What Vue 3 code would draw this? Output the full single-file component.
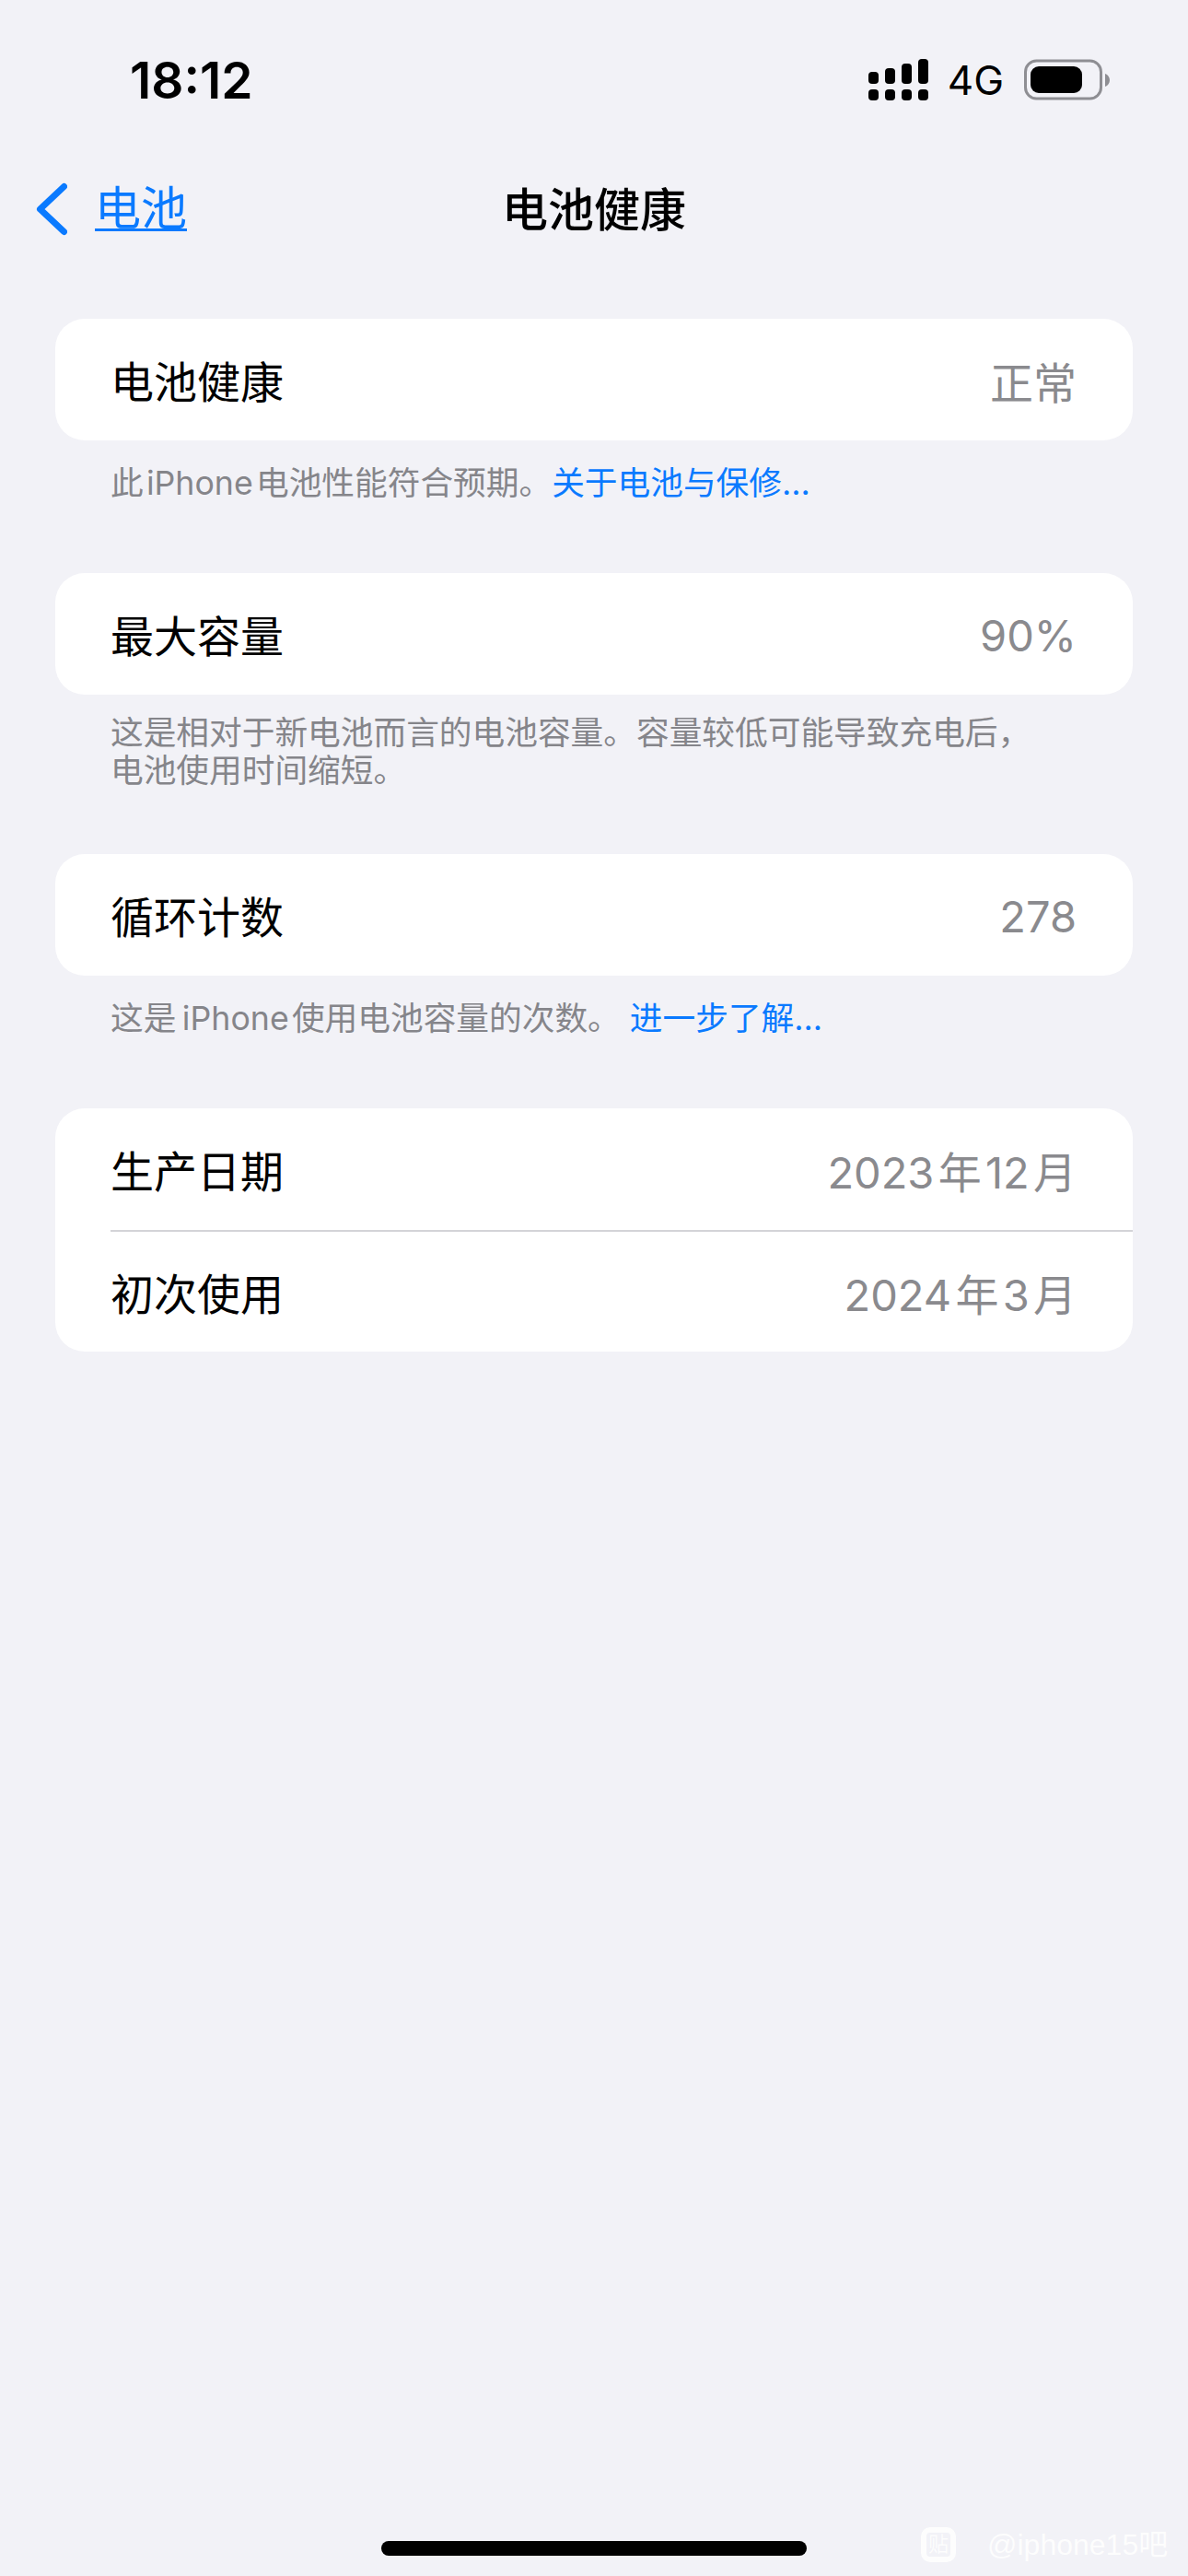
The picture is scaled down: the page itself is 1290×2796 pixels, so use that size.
<template>
  <div class="page">
    <div class="status-bar">
      <span class="time">18:12</span>
      <div class="status-icons">
        <svg class="signal" width="66" height="46" viewBox="0 0 66 46">
          <rect v-for="bar in signalBars" :key="bar.x" :x="bar.x" :y="bar.y" width="11" :height="bar.h" rx="4" />
          <rect v-for="bar in signalBars" :key="'d' + bar.x" :x="bar.x" y="33" width="11" height="12" rx="4" />
        </svg>
        <span class="network">4G</span>
        <svg class="battery" width="94" height="46" viewBox="0 0 94 46">
          <rect x="1.5" y="2" width="82" height="41" rx="12" fill="none" stroke="#8e8e93" stroke-width="3" />
          <rect x="7" y="8" width="56" height="29" rx="9" fill="#000" />
          <path d="M88 16 C91 17 93 20 93 23 C93 26 91 29 88 30 Z" fill="#8e8e93" />
        </svg>
      </div>
    </div>

    <div class="nav-bar">
      <div class="nav-back">
        <svg width="36" height="60" viewBox="0 0 36 60">
          <path d="M32.5 6.5 L6.5 31 L32.5 55.5" fill="none" stroke="#0a7aff" stroke-width="7" stroke-linecap="round" stroke-linejoin="round" />
        </svg>
        <span class="back-label">电池</span>
      </div>
      <span class="nav-title">电池健康</span>
    </div>

    <div class="content">
      <section v-for="group in groups" :key="group.id" class="group" :class="group.cls">
        <div class="card">
          <div v-for="row in group.rows" :key="row.label" class="row">
            <span class="row-label">{{ row.label }}</span>
            <span class="row-value" :class="{ 'row-num': row.num }">{{ row.value }}</span>
          </div>
        </div>
        <p v-if="group.note" class="note">
          {{ group.note }}<span v-if="group.link" class="link">{{ group.link }}</span>
        </p>
      </section>
    </div>

    <div class="home-indicator"></div>

    <div class="watermark">
      <span class="wm-badge">贴</span>
      <span class="wm-text">@iphone15吧</span>
    </div>
  </div>
</template>

<script setup>
const signalBars = [
  { x: 0, y: 14, h: 13 },
  { x: 18, y: 10, h: 17 },
  { x: 36, y: 5, h: 22 },
  { x: 54, y: 0, h: 27 },
];

const groups = [
  {
    id: 'health',
    rows: [{ label: '电池健康', value: '正常' }],
    note: '此\u200aiPhone\u200a电池性能符合预期。',
    link: '关于电池与保修...',
  },
  {
    id: 'capacity',
    cls: 'group-two-line',
    rows: [{ label: '最大容量', value: '90%', num: true }],
    note: '这是相对于新电池而言的电池容量。容量较低可能导致充电后，\n电池使用时间缩短。',
  },
  {
    id: 'cycles',
    rows: [{ label: '循环计数', value: '278', num: true }],
    note: '这是\u2009iPhone\u200a使用电池容量的次数。 ',
    link: '进一步了解...',
  },
  {
    id: 'dates',
    rows: [
      { label: '生产日期', value: '2023\u200a年\u200a12\u200a月' },
      { label: '初次使用', value: '2024\u200a年\u200a3\u200a月' },
    ],
  },
];
</script>

<style>
html,
body {
  margin: 0;
  background: #f2f2f7;
}
</style>

<style scoped>
.page {
  position: relative;
  width: 1290px;
  height: 2796px;
  overflow: hidden;
  background: #f2f2f7;
  color: #000;
  font-family: Inter, "Noto Sans CJK SC", sans-serif;
}

/* 상태바 */
.status-bar {
  height: 170px;
  box-sizing: border-box;
  padding: 54px 84px 0 141px;
  display: flex;
  justify-content: space-between;
  align-items: flex-start;
}

.time {
  font-size: 55px;
  line-height: 66px;
  font-weight: 600;
}

.status-icons {
  display: flex;
  align-items: center;
  gap: 20px;
  margin-top: 10px;
}

.signal {
  fill: #000;
}

.network {
  font-size: 44px;
  line-height: 46px;
  font-weight: 400;
}

.battery {
  margin-left: 2px;
}

/* 네비게이션 */
.nav-bar {
  position: relative;
  height: 116px;
  display: flex;
  align-items: center;
  justify-content: center;
}

.nav-back {
  position: absolute;
  left: 37px;
  top: 26px;
  display: flex;
  align-items: center;
  gap: 30px;
}

.back-label {
  font-size: 50px;
  line-height: 48px;
  height: 46px;
  color: #0a7aff;
  border-bottom: 3px solid #0a7aff;
}

.nav-title {
  font-size: 50px;
  font-weight: 500;
  line-height: 62px;
}

/* 목록 */
.content {
  padding: 60px 60px 0;
}

.group {
  margin-bottom: 26px;
}

.card {
  background: #fff;
  border-radius: 32px;
  overflow: hidden;
}

.row {
  height: 132px;
  box-sizing: border-box;
  margin-left: 60px;
  padding: 0 61px 2px 0;
  display: flex;
  align-items: center;
  justify-content: space-between;
}

.row + .row {
  border-top: 2px solid #d4d4d8;
}

.row-label {
  font-size: 47px;
}

.row-value {
  font-size: 47px;
  padding-top: 2px;
  color: #8a8a8e;
}

.row-num {
  padding-top: 5px;
}

.note {
  margin: 26px 0 0;
  min-height: 92px;
  padding: 0 60px;
  font-size: 35.7px;
  line-height: 41px;
  color: #85858a;
  white-space: pre-line;
}

.group-two-line .note {
  margin-top: 21px;
  min-height: 126px;
}

.link {
  color: #0a7aff;
}

.home-indicator {
  position: absolute;
  left: 414px;
  bottom: 22px;
  width: 462px;
  height: 16px;
  border-radius: 8px;
  background: #000;
}

.watermark {
  position: absolute;
  left: 1000px;
  top: 2743px;
  display: flex;
  align-items: center;
  gap: 34px;
  color: #fff;
  opacity: 0.85;
}

.wm-badge {
  width: 38px;
  height: 38px;
  border-radius: 10px;
  border: 6px solid #fff;
  box-sizing: border-box;
  font-size: 22px;
  line-height: 25px;
  text-align: center;
}

.wm-text {
  font-family: "Liberation Sans", "Noto Sans CJK SC", sans-serif;
  font-size: 32px;
  line-height: 38px;
  white-space: nowrap;
}
</style>
